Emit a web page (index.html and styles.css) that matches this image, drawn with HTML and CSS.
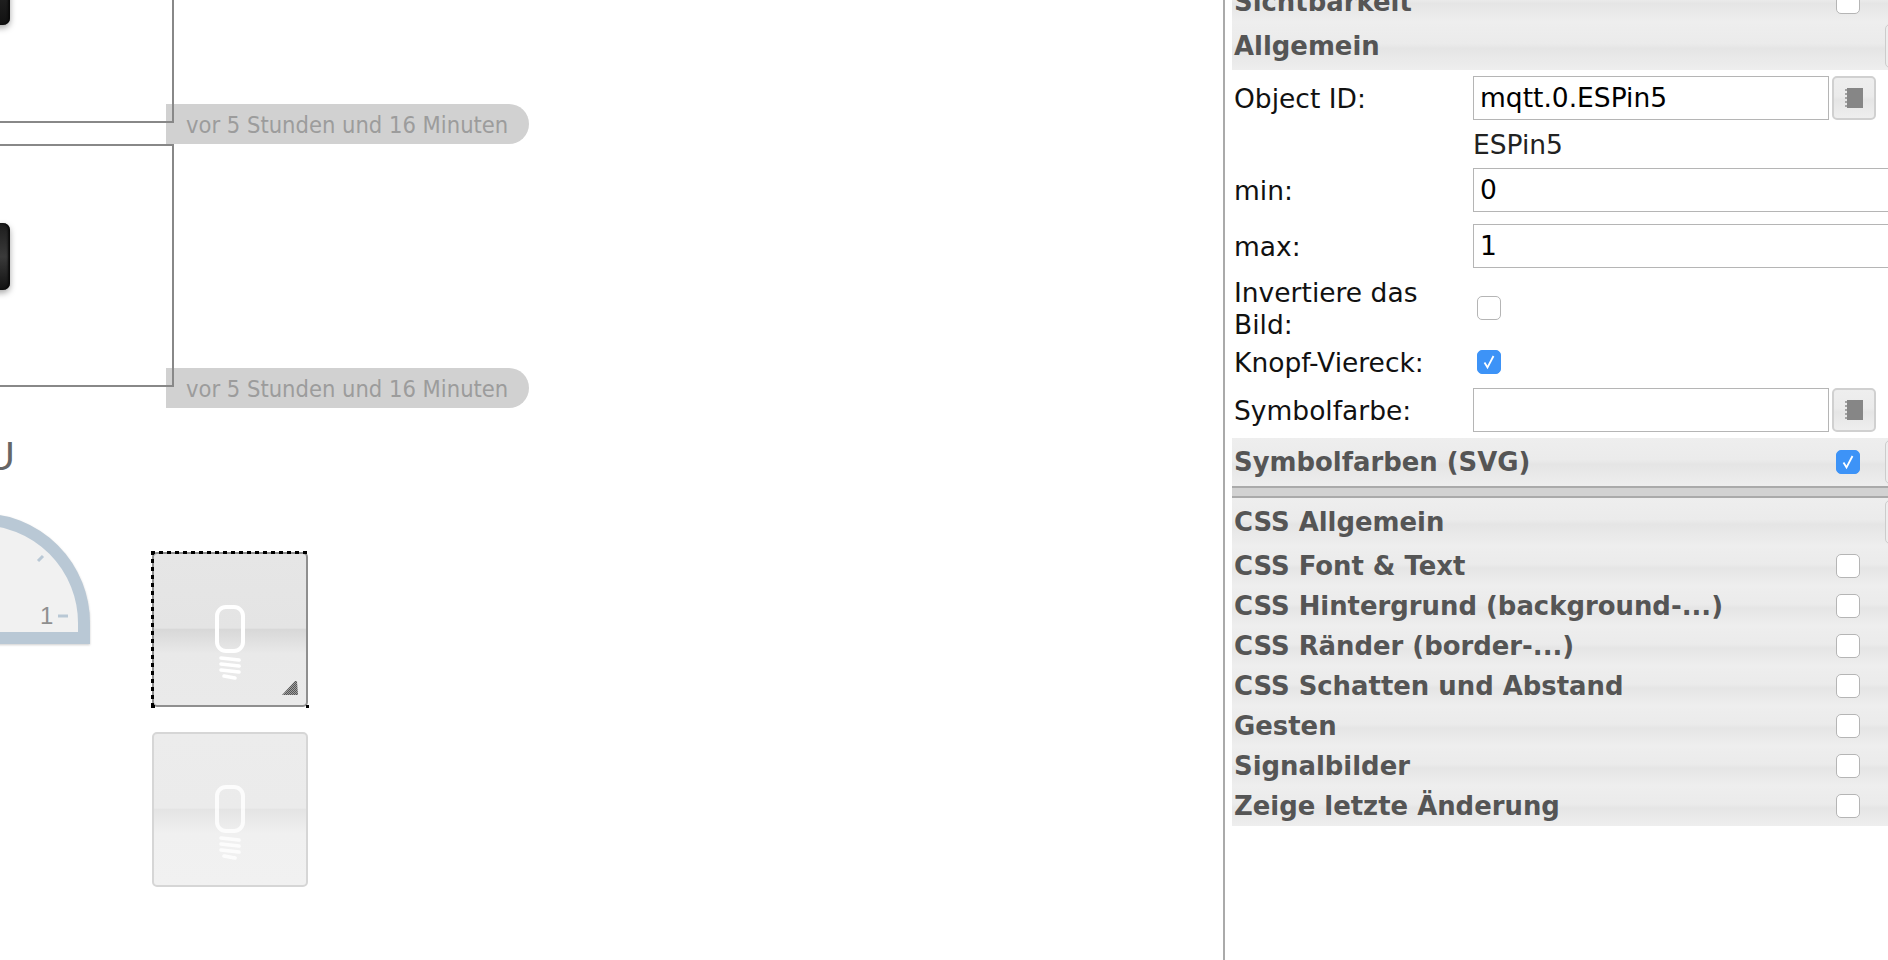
FILE: index.html
```html
<!DOCTYPE html>
<html lang="de">
<head>
<meta charset="utf-8">
<title>Editor</title>
<link rel="stylesheet" href="styles.css">
</head>
<body>
<svg class="defs" width="0" height="0" aria-hidden="true">
  <defs>
    <symbol id="bulb" viewBox="0 0 36 76">
      <rect x="5" y="2" width="26" height="44" rx="9" fill="none" stroke="#fff" stroke-width="4"/>
      <g fill="none" stroke="#fff" stroke-linecap="round">
        <path d="M9 53 L27 55" stroke-width="3.6"/>
        <path d="M9 59 L27 61" stroke-width="3.6"/>
        <path d="M9 65 L27 67" stroke-width="3.6"/>
        <path d="M12 71 L23 73" stroke-width="3.6"/>
      </g>
    </symbol>
    <symbol id="chip" viewBox="0 0 18 20">
      <rect x="2" y="0" width="16" height="20" fill="#868686"/>
      <path d="M0 2h2M0 6h2M0 10h2M0 14h2M0 18h2" stroke="#a4a4a4" stroke-width="2"/>
    </symbol>
    <symbol id="tick" viewBox="0 0 24 24">
      <path d="M7.5 12.5 L10.5 17.5 L16.5 6" fill="none" stroke="#fff" stroke-width="1.8"/>
    </symbol>
    <pattern id="dither" width="2" height="2" patternUnits="userSpaceOnUse">
      <rect width="2" height="2" fill="#a0a0a0"/>
      <rect width="1" height="1" fill="#555"/>
      <rect x="1" y="1" width="1" height="1" fill="#555"/>
    </pattern>
  </defs>
</svg>

<div class="app">
  <main class="canvas">
    <div class="blackbtn blackbtn-a"></div>
    <div class="blackbtn blackbtn-b"></div>

    <div class="pill pill-a">vor 5 Stunden und 16 Minuten</div>
    <div class="pill pill-b">vor 5 Stunden und 16 Minuten</div>
    <div class="frame frame-a"></div>
    <div class="frame frame-b"></div>

    <div class="clip-letter">U</div>

    <svg class="gauge" width="110" height="140" viewBox="0 0 110 140">
      <path class="gauge-shape" d="M-20 9 A 104 104 0 0 1 84 113 L84 128 L-30 128 L-30 9 Z"/>
      <path class="gauge-mark" d="M38 51 L43 46"/>
      <path class="gauge-mark" d="M58 106 L68 106"/>
      <text class="gauge-num" x="40" y="114">1</text>
    </svg>

    <div class="widget widget-sel">
      <svg class="bulb" width="36" height="76"><use href="#bulb"/></svg>
      <svg class="grip" width="16" height="16" viewBox="0 0 16 16"><polygon points="0,15 13,1 15,1 16,15" fill="url(#dither)"/></svg>
    </div>
    <div class="widget widget-dim">
      <svg class="bulb" width="36" height="76"><use href="#bulb"/></svg>
    </div>
  </main>

  <aside class="panel">
    <div class="sec sec-first"><span class="sec-name">Sichtbarkeit</span><span class="cb cb-end"></span></div>
    <div class="sec sec-tall"><span class="sec-name">Allgemein</span><span class="tab tab-only"></span></div>

    <div class="row row-first">
      <label class="lbl">Object ID:</label>
      <div class="inputs"><div class="inp inp-short">mqtt.0.ESPin5</div><button class="pick"><svg width="18" height="20"><use href="#chip"/></svg></button></div>
    </div>
    <div class="row row-note"><span></span><span class="note">ESPin5</span></div>
    <div class="row">
      <label class="lbl">min:</label>
      <div class="inputs"><div class="inp inp-long">0</div></div>
    </div>
    <div class="row row-gap">
      <label class="lbl">max:</label>
      <div class="inputs"><div class="inp inp-long">1</div></div>
    </div>
    <div class="row row-wrap">
      <label class="lbl">Invertiere das Bild:</label>
      <div class="cbcell"><span class="cb"></span></div>
    </div>
    <div class="row row-check">
      <label class="lbl">Knopf-Viereck:</label>
      <div class="cbcell"><span class="cb cb-on"><svg width="24" height="24"><use href="#tick"/></svg></span></div>
    </div>
    <div class="row row-color">
      <label class="lbl">Symbolfarbe:</label>
      <div class="inputs"><div class="inp inp-short"></div><button class="pick"><svg width="18" height="20"><use href="#chip"/></svg></button></div>
    </div>

    <div class="sec sec-tall sec-svg"><span class="sec-name">Symbolfarben (SVG)</span><span class="cb cb-on cb-tab"><svg width="24" height="24"><use href="#tick"/></svg></span><span class="tab"></span></div>
    <div class="divider"></div>
    <div class="sec sec-tall"><span class="sec-name">CSS Allgemein</span><span class="tab tab-only"></span></div>
    <div class="sec"><span class="sec-name">CSS Font &amp; Text</span><span class="cb cb-end"></span></div>
    <div class="sec"><span class="sec-name">CSS Hintergrund (background-...)</span><span class="cb cb-end"></span></div>
    <div class="sec"><span class="sec-name">CSS Ränder (border-...)</span><span class="cb cb-end"></span></div>
    <div class="sec"><span class="sec-name">CSS Schatten und Abstand</span><span class="cb cb-end"></span></div>
    <div class="sec"><span class="sec-name">Gesten</span><span class="cb cb-end"></span></div>
    <div class="sec"><span class="sec-name">Signalbilder</span><span class="cb cb-end"></span></div>
    <div class="sec"><span class="sec-name">Zeige letzte Änderung</span><span class="cb cb-end"></span></div>
  </aside>
</div>
</body>
</html>
```

FILE: styles.css
```css
* { box-sizing: border-box; }
html, body { margin: 0; height: 100%; overflow: hidden; background: #fff; }
body { font-family: "DejaVu Sans", sans-serif; font-size: 26.5px; color: #111; }
.defs { position: absolute; }

.app { display: flex; height: 960px; overflow: hidden; }

/* free canvas */
.canvas { position: relative; width: 1223px; flex: none; overflow: hidden; background: #fff; }

.blackbtn {
  position: absolute; left: -40px; width: 50px; border-radius: 7px;
  background: linear-gradient(180deg, #1c1c1c, #3a3a3a 50%, #111);
  box-shadow: inset -2px 0 2px #0a0a0a, 0 3px 6px rgba(0,0,0,.35);
}
.blackbtn-a { top: -40px; height: 65px; background: linear-gradient(180deg, #333, #111); }
.blackbtn-b { top: 223px; height: 67px; }

.pill {
  position: absolute; left: 166px; width: 363px; height: 40px; padding: 1px 0 0 20px;
  background: #d1d1d1; color: #9c9c9c; line-height: 40px; white-space: nowrap;
  font-family: "DejaVu Sans Condensed", "DejaVu Sans", sans-serif; font-size: 23.5px;
  border-radius: 0 20px 20px 0;
}
.pill-a { top: 104px; }
.pill-b { top: 368px; }

.frame { position: absolute; left: -2px; width: 176px; border: 2px solid #888; border-left: 0; }
.frame-a { top: -4px; height: 127px; }
.frame-b { top: 144px; height: 243px; }

.clip-letter {
  position: absolute; left: -14px; top: 434px; font-family: "Liberation Sans", sans-serif;
  font-size: 40px; line-height: 44px; color: #666;
}

.gauge { position: absolute; left: 0; top: 510px; }
.gauge-shape { fill: #f1f1f1; stroke: #b9c8d5; stroke-width: 12; filter: blur(.5px) drop-shadow(0 1px 1px rgba(90,90,90,.3)); }
.gauge-mark { fill: none; stroke: #b9c8d5; stroke-width: 3; }
.gauge-num { font-family: "Liberation Sans", sans-serif; font-size: 24px; fill: #8f8f8f; }

.widget { position: absolute; left: 152px; width: 156px; height: 155px; border-radius: 5px; display: flex; justify-content: center; padding-top: 51px; }
.widget-sel {
  top: 552px; border: 2px solid #8f8f8f;
  background: linear-gradient(180deg, #e6e6e6 0, #e4e4e4 49%, #d8d8d8 50%, #e9e9e9 66%, #eaeaea 100%);
}
.widget-sel::before {
  content: ""; position: absolute; inset: -3px; pointer-events: none;
  background:
    linear-gradient(90deg, #000 50%, transparent 50%) top left / 8px 3px repeat-x,
    linear-gradient(180deg, #000 50%, transparent 50%) top left / 3px 8px repeat-y,
    linear-gradient(#000, #000) bottom left / 4px 3px no-repeat,
    linear-gradient(#000, #000) bottom right / 3px 3px no-repeat;
}
.widget-dim {
  top: 732px; border: 2px solid #d6d6d6;
  background: linear-gradient(180deg, #ececec 0, #ebebeb 49%, #e4e4e4 50%, #f0f0f0 66%, #f1f1f1 100%);
}
.widget-dim .bulb { opacity: .85; }
.bulb { flex: none; }
.grip { position: absolute; right: 8px; bottom: 9px; }

/* attributes panel */
.panel { flex: 1; min-width: 0; border-left: 2px solid #aaa; padding-left: 7px; overflow: hidden; background: #fff; }

.sec {
  display: flex; align-items: center; height: 40px; padding-left: 2px;
  background: linear-gradient(180deg, #eeeeee 0, #ebebeb 45%, #e5e5e5 55%, #eeeeee 100%);
  font-size: 25.9px; font-weight: 700; color: #555; white-space: nowrap;
}
.sec-first { margin-top: -19px; height: 41px; }
.sec-tall { height: 48px; }
.sec-name { flex: 1; }

.cb {
  display: block; flex: none; width: 24px; height: 24px; border: 1px solid #b5b5b5; border-radius: 5px; background: #fff;
}
.cb svg { display: block; margin: -1px; }
.cb-end { margin-right: 28px; }
.cb-on { background: #3d93f7; border-color: #3d93f7; }
.cb-tab { margin-right: 25px; }

.tab { flex: none; width: 20px; height: 44px; margin-right: -17px; border: 1px solid #ccc; border-radius: 5px; background: #eee; }
.tab-only { margin-left: auto; }

.row { display: grid; grid-template-columns: 241px 1fr; align-items: center; min-height: 44px; }
.row-first { margin-top: 6px; }
.row-note { min-height: 48px; }
.row-gap { margin-top: 12px; }
.row-wrap { margin-top: 9px; line-height: 32px; }
.row-wrap .cbcell { padding-bottom: 2px; }
.row-check { margin-top: 5px; min-height: 32px; }
.row-color { margin-top: 10px; }
.sec-svg { margin-top: 6px; }

.lbl { padding-left: 2px; padding-right: 20px; }
.note { color: #222; }
.inputs { display: flex; gap: 3px; }
.inp { flex: none; height: 44px; padding: 0 6px; border: 1px solid #b5b5b5; background: #fff; color: #000; line-height: 42px; }
.inp-short { width: 356px; }
.inp-long { width: 480px; }
.pick {
  flex: none; width: 44px; height: 44px; padding: 0; display: flex; align-items: center; justify-content: center;
  border: 2px solid #d0d0d0; border-radius: 5px;
  background: linear-gradient(180deg, #eeeeee 0, #ebebeb 45%, #e5e5e5 55%, #eeeeee 100%);
}
.pick svg { display: block; }
.cbcell { padding-left: 4px; display: flex; align-items: center; }

.divider { height: 12px; border-top: 2px solid #aaa; border-bottom: 2px solid #aaa; background: #d2d2d2; }
```
